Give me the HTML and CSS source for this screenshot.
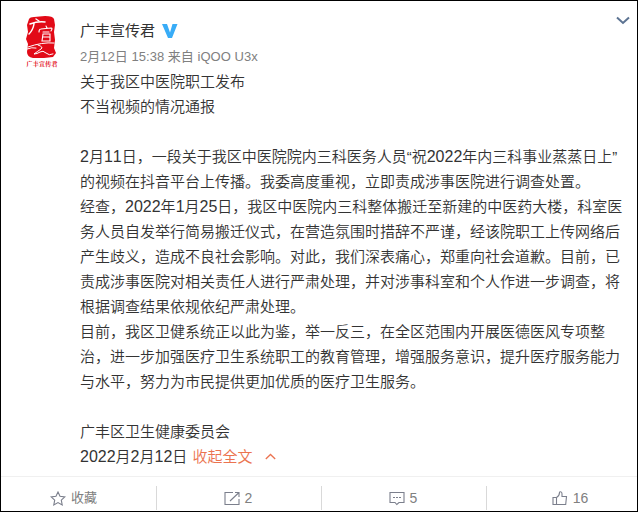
FILE: index.html
```html
<!DOCTYPE html>
<html lang="zh-CN">
<head>
  <meta charset="UTF-8">
  <meta name="viewport" content="width=device-width, initial-scale=1.0">
  <title>广丰宣传君</title>
  <link rel="stylesheet" href="styles.css">
</head>
<body>
  <div class="card">
    <div class="feed">
      <div class="avatar">
        <svg width="32" height="52" viewBox="0 0 32 52">
          <path fill="#e20a17" d="M3 3Q4 1 8 1L19 0Q27 0 28 3L29 9 28 16 29 24 28 32 30 37 27 41 18 42 7 42Q1 41 1 36L2 28 0 23 2 16 1 9Z"/>
          <g fill="none" stroke="#fff" stroke-linecap="round">
            <path d="M10 3l3 2" stroke-width="1.4"/>
            <path d="M4 8Q12 5 19 6M8 8Q7 14 3 18" stroke-width="1.5"/>
            <path d="M20 10l1 2M13 16q0-3 2-3l10-1q2 0 0 3M17 16h6M17 18l-1 7h8V18zM17 21h6" stroke-width="1.1"/>
            <path d="M2 31Q16 26 28 27M12 29q6 2 3 4t-7 5q3 0 6-2t6 1 7 1M1 33q5-2 9-1" stroke-width="1"/>
          </g>
          <text class="seal-name" x="0.5" y="49.500" textLength="31">广丰宣传君</text>
        </svg>
      </div>
      <div class="detail">
        <div class="head">
          <span class="name">广丰宣传君</span>
          <svg class="verify" width="16" height="15" viewBox="0 0 16 15">
            <path fill="#38acf7" d="M0 0h5l3 8.500L10.500 0h5L10 14H6z"/>
          </svg>
          <svg class="more" width="14" height="9" viewBox="0 0 14 9">
            <path d="M1 1.500l6 5.500 6-5.500" fill="none" stroke="#5c7392" stroke-width="2"/>
          </svg>
        </div>
        <div class="from">2月12日 15:38 来自 iQOO U3x</div>
        <div class="text">
          <p>关于我区中医院职工发布</p>
          <p>不当视频的情况通报</p>
          <p>&nbsp;</p>
          <p><span class="num">2</span>月<span class="num">11</span>日，一段关于我区中医院院内三科医务人员“祝<span class="num">2022</span>年内三科事业蒸蒸日上”</p>
          <p>的视频在抖音平台上传播。我委高度重视，立即责成涉事医院进行调查处置。</p>
          <p>经查，<span class="num">2022</span>年<span class="num">1</span>月<span class="num">25</span>日，我区中医院内三科整体搬迁至新建的中医药大楼，科室医</p>
          <p>务人员自发举行简易搬迁仪式，在营造氛围时措辞不严谨，经该院职工上传网络后</p>
          <p>产生歧义，造成不良社会影响。对此，我们深表痛心，郑重向社会道歉。目前，已</p>
          <p>责成涉事医院对相关责任人进行严肃处理，并对涉事科室和个人作进一步调查，将</p>
          <p>根据调查结果依规依纪严肃处理。</p>
          <p>目前，我区卫健系统正以此为鉴，举一反三，在全区范围内开展医德医风专项整</p>
          <p>治，进一步加强医疗卫生系统职工的教育管理，增强服务意识，提升医疗服务能力</p>
          <p>与水平，努力为市民提供更加优质的医疗卫生服务。</p>
          <p>&nbsp;</p>
          <p>广丰区卫生健康委员会</p>
          <p><span class="num">2022</span>月<span class="num">2</span>月<span class="num">12</span>日 <a class="fold">收起全文<svg width="11" height="7" viewBox="0 0 11 7"><path d="M.8 6l4.700-4.500L10.200 6" fill="none" stroke="#eb7350" stroke-width="1.300"/></svg></a></p>
        </div>
      </div>
    </div>
    <div class="handle">
      <div class="item">
        <svg width="16" height="15" viewBox="0 0 16 15"><path d="M8 1l2 4.300 4.800.6-3.500 3.300.9 4.700L8 11.600l-4.200 2.300.9-4.700L1.200 5.900 6 5.300z"/></svg>
        <span class="fav">收藏</span>
      </div>
      <div class="item">
        <svg width="16" height="15" viewBox="0 0 16 15"><path d="M9 1.500H1v12h14V8M6 10l9-8.500M11 1.500h4V6"/></svg>
        <span>2</span>
      </div>
      <div class="item">
        <svg width="16" height="15" viewBox="0 0 16 15"><path d="M1 1.500h14v10h-5L7.800 13.500 6 11.500H1z"/><path d="M4 6.500h8" stroke-dasharray="2 1"/></svg>
        <span>5</span>
      </div>
      <div class="item">
        <svg width="16" height="15" viewBox="0 0 16 15"><path d="M1 6.500h3.500v7H1zM4.500 6.500Q7.500 5 7.500 1.500q0-.8 1-.8 1.500 0 1.500 2v2.800h4.500l-.8 8H4.500"/></svg>
        <span>16</span>
      </div>
    </div>
  </div>
</body>
</html>
```

FILE: styles.css
```css
* { box-sizing: border-box; }
body { margin: 0; font-family: "Liberation Sans", "Noto Sans CJK SC", sans-serif; color: #333; background: #fff; font-kerning: none; }
.card { display: flex; flex-direction: column; width: 638px; height: 512px; border: 1px solid #000; overflow: hidden; }
.feed { display: flex; height: 475px; padding: 15px 7px 0 25px; }
.avatar { flex: none; width: 54px; }
.avatar svg { display: block; }
.seal-name { font-family: "Noto Serif CJK SC", "Noto Sans CJK SC", sans-serif; font-size: 6px; font-weight: bold; fill: #e20a17; }
.detail { flex: 1; min-width: 0; }
.head { display: flex; align-items: flex-start; height: 29px; }
.name { font-size: 15px; line-height: 30px; }
.verify { margin: 8px 0 0 7px; }
.more { margin-left: auto; }
.from { height: 24px; font-size: 13px; line-height: 24px; letter-spacing: 0.03px; color: #808080; white-space: nowrap; }
.text { font-size: 15px; font-weight: 350; }
.text p { height: 25px; margin: 0; line-height: 25px; white-space: nowrap; }
.num { font-size: 16px; font-weight: 400; }
.fold { color: #eb7350; margin-left: 1px; }
.fold svg { margin: 0 0 2px 12px; }
.handle { display: flex; flex: 1; border-top: 1px solid #f0f0f0; padding-top: 9px; }
.item { display: flex; justify-content: center; align-items: center; width: 165px; height: 24px; padding-right: 2px; gap: 5px; border-right: 1px solid #d9d9d9; font-size: 14px; line-height: 24px; color: #808080; }
.item:first-child { width: 156px; padding-right: 10px; }
.item:last-child { flex: 1; padding-left: 18px; border-right: 0; }
.item svg { fill: none; stroke: #7b7f8c; stroke-width: 1.1; }
.fav { font-size: 13px; }
```
